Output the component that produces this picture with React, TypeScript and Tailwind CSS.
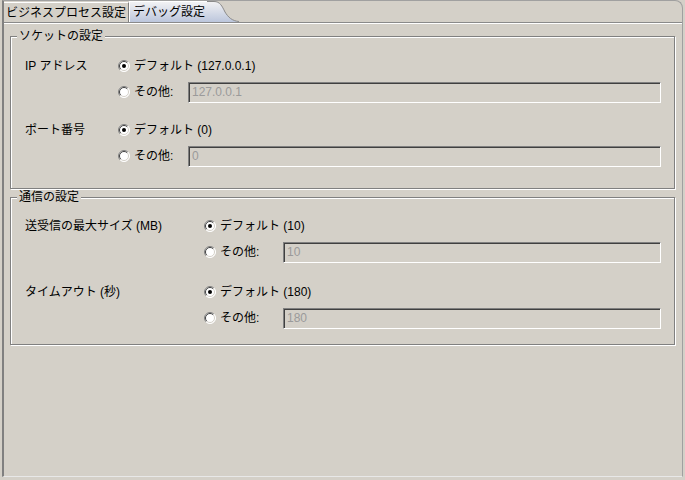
import React from 'react';

const font = { fontFamily: '"Liberation Sans", "Noto Sans CJK JP", sans-serif' };

function Radio({ checked }: { checked?: boolean }) {
  return (
    <svg width="12" height="12" viewBox="0 0 12 12" className="shrink-0">
      <circle cx="6" cy="6" r="5.5" fill="#ffffff" />
      <path d="M2.1 9.9 A5.5 5.5 0 0 1 9.9 2.1" fill="none" stroke="#808080" strokeWidth="1" />
      <path d="M2.8 9.2 A4.5 4.5 0 0 1 9.2 2.8" fill="none" stroke="#404040" strokeWidth="1" />
      <path d="M9.9 2.1 A5.5 5.5 0 0 1 2.1 9.9" fill="none" stroke="#ffffff" strokeWidth="1" />
      <path d="M9.2 2.8 A4.5 4.5 0 0 1 2.8 9.2" fill="none" stroke="#d4d0c8" strokeWidth="1" />
      {checked && <circle cx="6" cy="6" r="2" fill="#000000" />}
    </svg>
  );
}

function Field({ value }: { value: string }) {
  return (
    <div className="flex-1 h-[21px] border-t border-l border-[#808080] border-b border-r border-b-white border-r-white shadow-[inset_1px_1px_0_#404040] bg-[#d4d0c8] flex items-center pl-[3px] text-[12px] text-[#9a9a9a]">
      {value}
    </div>
  );
}

interface OptionProps {
  label: string;
  defaultText: string;
  value: string;
  labelW: string;
  otherW: string;
  top: string;
}

function OptionGroup({ label, defaultText, value, labelW, otherW, top }: OptionProps) {
  return (
    <div className={`flex ${top}`}>
      <div className={`${labelW} h-[26px] flex items-center shrink-0`}>{label}</div>
      <div className="flex-1 flex flex-col">
        <div className="h-[26px] flex items-center gap-[4px]">
          <Radio checked />
          <span>{defaultText}</span>
        </div>
        <div className="h-[26px] flex items-center gap-[4px]">
          <Radio />
          <span className={`${otherW} shrink-0`}>その他:</span>
          <Field value={value} />
        </div>
      </div>
    </div>
  );
}

function GroupBox({ title, children, className }: { title: string; children: React.ReactNode; className?: string }) {
  return (
    <div className={`relative border border-[#808080] shadow-[inset_1px_1px_0_#ffffff,1px_1px_0_#ffffff] ${className ?? ''}`}>
      <span className="absolute left-[6px] top-[-8px] bg-[#d4d0c8] px-[2px] leading-[14px]">{title}</span>
      {children}
    </div>
  );
}

export default function App() {
  return (
    <div className="w-[685px] h-[480px] bg-[#d4d0c8] text-[12px] text-black leading-[14px]" style={font}>
      <div className="ml-[2px] w-[681px] h-[477px] border-l-2 border-r border-t border-b border-l-[#808080] border-r-[#a0a0a0] border-t-[#a0a0a0] border-b-[#e8e8e8] rounded-tr-[8px] flex flex-col">
        {/* tab strip */}
        <div className="h-[21px] flex items-end">
          <div className="h-[20px] px-[2px] flex items-center border-t border-r border-t-[#ffffff] border-r-[#808080] bg-[#d4d0c8]">
            ビジネスプロセス設定
          </div>
          <div className="h-[21px] flex items-end">
            <div className="h-[21px] pl-[3px] pr-[2px] flex items-center bg-gradient-to-b from-[#f2f2f4] to-[#bcc6dc] border-t border-l border-t-white border-l-white">
              デバッグ設定
            </div>
            <svg width="32" height="21" viewBox="0 0 32 21" className="block">
              <defs>
                <linearGradient id="tabg" x1="0" y1="0" x2="0" y2="1">
                  <stop offset="0" stopColor="#f2f2f4" />
                  <stop offset="1" stopColor="#bcc6dc" />
                </linearGradient>
              </defs>
              <path d="M0 0.5 L7 0.5 C13 0.5 15 5 18 11 C21 16 25 20 32 20.5 L32 21 L0 21 Z" fill="url(#tabg)" />
              <path d="M0 0.5 L7 0.5 C13 0.5 15 5 18 11 C21 16 25 20 32 20.5" fill="none" stroke="#8a8a8a" strokeWidth="1" />
            </svg>
          </div>
        </div>
        <div className="border-t border-[#8a8a8a] h-0" />
        <div className="border-t border-white h-0" />

        {/* content */}
        <div className="pl-[6px] pr-[7px] pt-[12px] flex flex-col">
          <GroupBox title="ソケットの設定" className="h-[153px] pl-[14px] pr-[13px] pt-[16px]">
            <OptionGroup
              label="IP アドレス"
              defaultText="デフォルト (127.0.0.1)"
              value="127.0.0.1"
              labelW="w-[93px]"
              otherW="w-[50px]"
              top=""
            />
            <OptionGroup
              label="ポート番号"
              defaultText="デフォルト (0)"
              value="0"
              labelW="w-[93px]"
              otherW="w-[50px]"
              top="mt-[12px]"
            />
          </GroupBox>
          <GroupBox title="通信の設定" className="mt-[8px] h-[148px] pl-[14px] pr-[13px] pt-[15px]">
            <OptionGroup
              label="送受信の最大サイズ (MB)"
              defaultText="デフォルト (10)"
              value="10"
              labelW="w-[179px]"
              otherW="w-[59px]"
              top=""
            />
            <OptionGroup
              label="タイムアウト (秒)"
              defaultText="デフォルト (180)"
              value="180"
              labelW="w-[179px]"
              otherW="w-[59px]"
              top="mt-[14px]"
            />
          </GroupBox>
        </div>
      </div>
    </div>
  );
}
